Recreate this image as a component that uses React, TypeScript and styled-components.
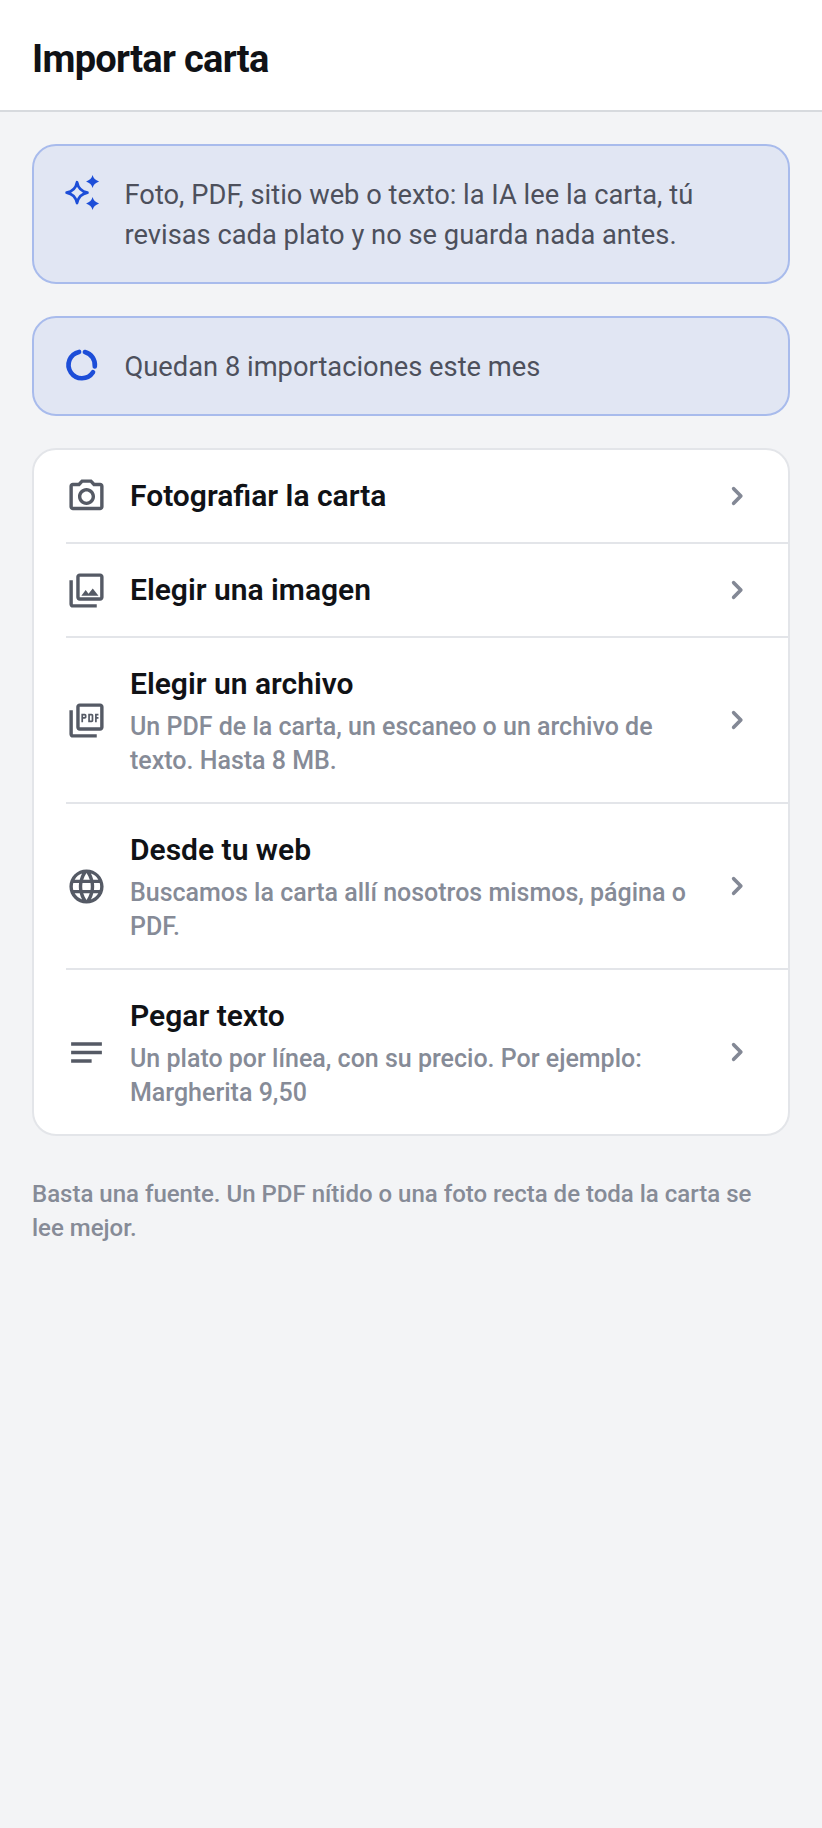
import React from 'react';
import styled, { createGlobalStyle } from 'styled-components';
import { MdLanguage, MdNotes, MdOutlinePhotoCamera, MdOutlinePhotoLibrary, MdOutlinePictureAsPdf } from 'react-icons/md';

const GlobalStyle = createGlobalStyle`
  html, body {
    margin: 0;
    padding: 0;
    background: #f3f4f6;
    font-family: Roboto, "Liberation Sans", sans-serif;
  }
`;

const Page = styled.div`
  min-height: 1828px;
  background: #f3f4f6;
`;

const Header = styled.header`
  height: 103px;
  background: #fff;
  border-bottom: 2px solid #d7dade;
  padding: 7px 32px 0;
  display: flex;
  align-items: center;
`;

const Title = styled.h1`
  margin: 0;
  font-size: 38px;
  font-weight: 700;
  letter-spacing: -0.7px;
  color: #101216;
`;

const Content = styled.main`
  padding: 32px;
  display: flex;
  flex-direction: column;
  gap: 32px;
`;

const Notice = styled.div`
  display: flex;
  align-items: flex-start;
  gap: 22px;
  padding: 28px 27.5px;
  background: #e1e6f3;
  border: 2px solid #a8bbec;
  border-radius: 24px;
`;

const NoticeIcon = styled.svg`
  width: 41px;
  height: 41px;
  flex: none;
  margin-top: -1px;
  color: #1d4ed8;
`;

const NoticeText = styled.p`
  margin: 1px 0 -1px;
  font-size: 27.3px;
  line-height: 40px;
  color: #4d505c;
`;

const Card = styled.section`
  background: #fff;
  border: 2px solid #e3e5e9;
  border-radius: 24px;
  padding-left: 32px;
`;

const Row = styled.div<{ $last?: boolean }>`
  display: flex;
  align-items: center;
  gap: 23px;
  padding: 24px 31px 24px 0;
  border-bottom: ${(p) => (p.$last ? 'none' : '2px solid #e3e5e9')};
`;

const RowIcon = styled.div`
  display: flex;
  flex: none;
  font-size: 41px;
  color: #555a65;
`;

const RowBody = styled.div`
  flex: 1;
  min-width: 0;
`;

const RowTitle = styled.div`
  font-size: 30px;
  line-height: 44px;
  font-weight: 600;
  color: #101216;
`;

const RowHint = styled.div`
  margin-top: 4px;
  font-size: 25px;
  line-height: 34px;
  font-weight: 500;
  color: #868b97;
`;

const ChevronIcon = styled.svg`
  flex: none;
  width: 40px;
  height: 40px;
  color: #838895;
`;

const Footnote = styled.p`
  margin: 0;
  padding: 9px 16px 0 0;
  font-size: 24px;
  line-height: 34px;
  font-weight: 500;
  color: #868b97;
`;

const options = [
  { icon: <MdOutlinePhotoCamera />, title: 'Fotografiar la carta' },
  { icon: <MdOutlinePhotoLibrary />, title: 'Elegir una imagen' },
  {
    icon: <MdOutlinePictureAsPdf />,
    title: 'Elegir un archivo',
    hint: 'Un PDF de la carta, un escaneo o un archivo de texto. Hasta 8 MB.',
  },
  {
    icon: <MdLanguage />,
    title: 'Desde tu web',
    hint: 'Buscamos la carta allí nosotros mismos, página o PDF.',
  },
  {
    icon: <MdNotes />,
    title: 'Pegar texto',
    hint: 'Un plato por línea, con su precio. Por ejemplo: Margherita 9,50',
  },
];

const Sparkles = () => (
  <NoticeIcon viewBox="0 0 24 24" fill="none">
    <path d="M8.8 5.4c.7 3.7 2.4 5.4 6.1 6.1-3.7.7-5.4 2.4-6.1 6.1-.7-3.7-2.4-5.4-6.1-6.1 3.7-.7 5.4-2.4 6.1-6.1Z" stroke="currentColor" strokeWidth="1.6" strokeLinejoin="round" />
    <path d="M17.9 1.2c.5 1.9 1.6 3 3.8 3.8-2.2.8-3.3 1.9-3.8 3.8-.5-1.9-1.6-3-3.8-3.8 2.2-.8 3.3-1.9 3.8-3.8Z" fill="currentColor" />
    <path d="M17.9 14.1c.5 1.9 1.6 3 3.8 3.8-2.2.8-3.3 1.9-3.8 3.8-.5-1.9-1.6-3-3.8-3.8 2.2-.8 3.3-1.9 3.8-3.8Z" fill="currentColor" />
  </NoticeIcon>
);

const Ring = () => (
  <NoticeIcon viewBox="0 0 24 24" fill="none">
    <path d="M18.15 15.95A7.8 7.8 0 1 1 10 4.03" stroke="currentColor" strokeWidth="2.7" strokeLinecap="round" />
    <path d="M13.4 4.1A7.8 7.8 0 0 1 19.19 12.6" stroke="currentColor" strokeWidth="2.7" strokeLinecap="round" />
  </NoticeIcon>
);

const Chevron = () => (
  <ChevronIcon viewBox="0 0 24 24" fill="none">
    <path d="M10 7.6 14.3 12 10 16.4" stroke="currentColor" strokeWidth="2.2" strokeLinecap="round" strokeLinejoin="round" />
  </ChevronIcon>
);

export default function App() {
  return (
    <Page>
      <GlobalStyle />
      <Header>
        <Title>Importar carta</Title>
      </Header>
      <Content>
        <Notice>
          <Sparkles />
          <NoticeText>Foto, PDF, sitio web o texto: la IA lee la carta, tú revisas cada plato y no se guarda nada antes.</NoticeText>
        </Notice>
        <Notice>
          <Ring />
          <NoticeText>Quedan 8 importaciones este mes</NoticeText>
        </Notice>
        <Card>
          {options.map((o, i) => (
            <Row key={o.title} $last={i === options.length - 1}>
              <RowIcon>{o.icon}</RowIcon>
              <RowBody>
                <RowTitle>{o.title}</RowTitle>
                {o.hint && <RowHint>{o.hint}</RowHint>}
              </RowBody>
              <Chevron />
            </Row>
          ))}
        </Card>
        <Footnote>Basta una fuente. Un PDF nítido o una foto recta de toda la carta se lee mejor.</Footnote>
      </Content>
    </Page>
  );
}
